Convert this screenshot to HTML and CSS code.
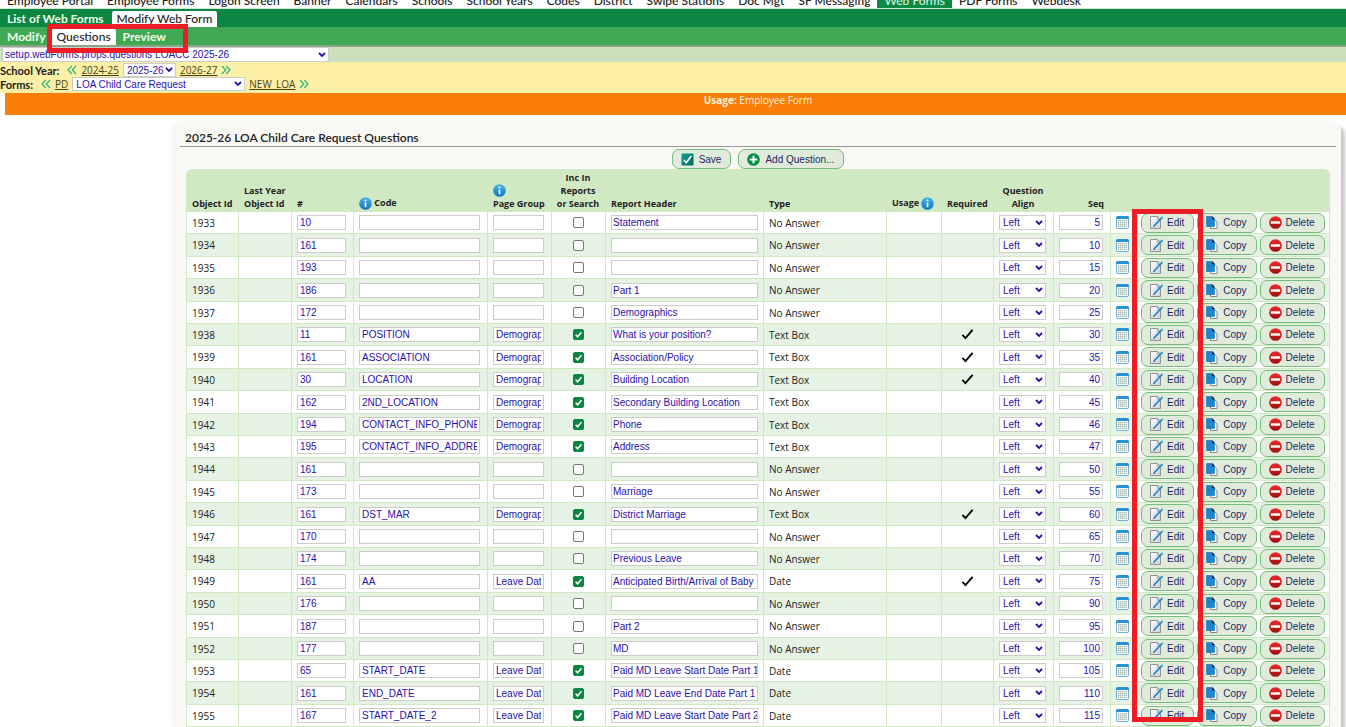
FILE: index.html
```html
<!DOCTYPE html>
<html lang="en">
<head>
    <meta charset="UTF-8">
    <meta name="viewport" content="width=device-width, initial-scale=1.0">
    <title>Web Forms - Questions</title>
    <link rel="stylesheet" href="styles.css">
</head>
<body>
    <!-- icon sprite -->
    <svg class="sprite" aria-hidden="true">
        <defs>
            <linearGradient id="blueGrad" x1="0" y1="0" x2="0" y2="1">
                <stop offset="0" stop-color="#4db4ea"/>
                <stop offset="1" stop-color="#0f75bd"/>
            </linearGradient>
            <linearGradient id="redGrad" x1="0" y1="0" x2="0" y2="1">
                <stop offset="0" stop-color="#ee2c2c"/>
                <stop offset="1" stop-color="#9c0f12"/>
            </linearGradient>
            <linearGradient id="tealGrad" x1="0" y1="0" x2="1" y2="1">
                <stop offset="0" stop-color="#0fa596"/>
                <stop offset="1" stop-color="#04675c"/>
            </linearGradient>
            <linearGradient id="pageGrad" x1="0" y1="0" x2="1" y2="1">
                <stop offset="0" stop-color="#ffffff"/>
                <stop offset="1" stop-color="#c9cdd2"/>
            </linearGradient>
        </defs>
        <symbol id="i-info" viewBox="0 0 14 14">
            <circle cx="7" cy="7" r="6.8" fill="url(#blueGrad)"/>
            <circle cx="7" cy="3.8" r="1.1" fill="#fff"/>
            <path d="M7 6v5" stroke="#fff" stroke-width="1.8"/>
        </symbol>
        <symbol id="i-save" viewBox="0 0 14 14">
            <rect x=".5" y=".5" width="13" height="13" rx="1" fill="url(#tealGrad)"/>
            <path d="M3 7.5l2.7 3L11 3.2" fill="none" stroke="#fff" stroke-width="1.8"/>
        </symbol>
        <symbol id="i-add" viewBox="0 0 14 14">
            <circle cx="7" cy="7" r="6.8" fill="#0b8c45"/>
            <path d="M7 3v8M3 7h8" stroke="#fff" stroke-width="2"/>
        </symbol>
        <symbol id="i-cal" viewBox="0 0 13 13">
            <rect x=".5" y=".5" width="12" height="12" rx="1.5" fill="#fff" stroke="#6fb2dc"/>
            <path d="M0 3V2q0-2 2-2h9q2 0 2 2v1z" fill="#2492d6"/>
            <path d="M2 4.500h9M2 6.500h9M2 8.500h9M2 10.500h9M2.500 4v7M4.500 4v7M6.500 4v7M8.500 4v7M10.500 4v7" stroke="#a9b8ae" stroke-opacity=".6"/>
        </symbol>
        <symbol id="i-edit" viewBox="0 0 13 13">
            <path d="M.5.5h7l3 3v9H.5z" fill="url(#pageGrad)" stroke="#8d9399"/>
            <path d="M7.500.5v3h3" fill="none" stroke="#8d9399" stroke-width=".7"/>
            <path d="M4 10l8.500-9" stroke="#1b85cc" stroke-width="1.600"/>
            <path d="M3 11.200l1.700-.8-.9-.9z" fill="#333"/>
        </symbol>
        <symbol id="i-copy" viewBox="0 0 13 13">
            <path d="M4.500 3.500h4l2.500 2.500v6.500H4.500z" fill="#fff" stroke="#888"/>
            <path d="M.5.5h5.500l2.500 2.500v7.500h-8z" fill="#1b87d0" stroke="#0f6fb4" stroke-width=".6"/>
            <path d="M6 0l3 3.200H6z" fill="#223"/>
        </symbol>
        <symbol id="i-delete" viewBox="0 0 14 14">
            <circle cx="7" cy="7" r="6.800" fill="url(#redGrad)"/>
            <rect x="2" y="5.700" width="10" height="2.600" fill="#fff"/>
        </symbol>
        <symbol id="i-check" viewBox="0 0 14 14">
            <path d="M1.500 7.500l3.300 3.500L12.500 2" fill="none" stroke="#000" stroke-width="2"/>
        </symbol>
        <symbol id="i-prev" viewBox="0 0 10 10">
            <path d="M4.800 1L1 5l3.800 4M9 1L5.200 5 9 9" fill="none" stroke="#2fb383" stroke-width="1.200"/>
        </symbol>
        <symbol id="i-next" viewBox="0 0 10 10">
            <path d="M1 1l3.800 4L1 9M5.200 1L9 5 5.200 9" fill="none" stroke="#2fb383" stroke-width="1.200"/>
        </symbol>
    </svg>

    <header>
        <nav class="main-nav">
            <a href="#">Employee Portal</a>
            <a href="#">Employee Forms</a>
            <a href="#">Logon Screen</a>
            <a href="#">Banner</a>
            <a href="#">Calendars</a>
            <a href="#">Schools</a>
            <a href="#">School Years</a>
            <a href="#">Codes</a>
            <a href="#">District</a>
            <a href="#">Swipe Stations</a>
            <a href="#">Doc Mgt</a>
            <a href="#">SF Messaging</a>
            <a href="#" class="active">Web Forms</a>
            <a href="#">PDF Forms</a>
            <a href="#">Webdesk</a>
        </nav>
        <nav class="tabs tabs-dark">
            <a href="#">List of Web Forms</a>
            <a href="#" class="active">Modify Web Form</a>
        </nav>
        <nav class="tabs tabs-light">
            <a href="#">Modify</a>
            <a href="#" class="active">Questions</a>
            <a href="#">Preview</a>
            <span class="highlight highlight-tabs"></span>
        </nav>
    </header>

    <div class="props-bar">
        <select class="props-select" aria-label="Property">
            <option>setup.webForms.props.questions LOACC 2025-26</option>
        </select>
    </div>

    <div class="filters">
        <div class="filter-row">
            <label for="year">School Year:</label>
            <svg class="arrow"><use href="#i-prev"/></svg>
            <a href="#">2024-25</a>
            <select id="year" class="year-select"><option>2025-26</option></select>
            <a href="#">2026-27</a>
            <svg class="arrow"><use href="#i-next"/></svg>
        </div>
        <div class="filter-row">
            <label for="form">Forms:</label>
            <svg class="arrow"><use href="#i-prev"/></svg>
            <a href="#">PD</a>
            <select id="form" class="form-select"><option>LOA Child Care Request</option></select>
            <a href="#">NEW_LOA</a>
            <svg class="arrow"><use href="#i-next"/></svg>
        </div>
    </div>

    <div class="usage-bar"><b>Usage:</b> Employee Form</div>

    <main class="panel">
        <h1>2025-26 LOA Child Care Request Questions</h1>
        <div class="toolbar">
            <button type="button" class="btn"><svg><use href="#i-save"/></svg>Save</button>
            <button type="button" class="btn"><svg><use href="#i-add"/></svg>Add Question...</button>
        </div>

        <div class="table-wrap">
            <table class="questions">
                <colgroup>
                    <col class="c-id"><col class="c-last"><col class="c-num"><col class="c-code">
                    <col class="c-group"><col class="c-inc"><col class="c-header"><col class="c-type">
                    <col class="c-usage"><col class="c-req"><col class="c-align"><col class="c-seq">
                    <col class="c-cal"><col class="c-actions">
                </colgroup>
                <thead>
                    <tr>
                        <th>Object Id</th>
                        <th>Last Year<br>Object Id</th>
                        <th>#</th>
                        <th><svg class="info"><use href="#i-info"/></svg> Code</th>
                        <th><svg class="info"><use href="#i-info"/></svg><br>Page Group</th>
                        <th class="center">Inc In<br>Reports<br>or Search</th>
                        <th>Report Header</th>
                        <th>Type</th>
                        <th>Usage <svg class="info"><use href="#i-info"/></svg></th>
                        <th>Required</th>
                        <th class="center">Question<br>Align</th>
                        <th class="right">Seq</th>
                        <th></th>
                        <th></th>
                    </tr>
                </thead>
                <tbody id="rows"></tbody>
            </table>
            <span class="highlight highlight-edit"></span>
        </div>
    </main>

    <script src="questions.js"></script>
</body>
</html>
```
FILE: styles.css
```css
* {
    box-sizing: border-box;
}
body {
    margin: 0;
    font-family: "Open Sans", sans-serif;
    font-size: 10px;
    color: #222;
    background: #fff;
    overflow: hidden;
}
a {
    color: inherit;
}
.sprite {
    position: absolute;
    width: 0;
    height: 0;
}

/* navigation */
.main-nav {
    display: flex;
    align-items: flex-end;
    height: 9px;
    overflow: hidden;
    font-family: Lato, sans-serif;
    font-size: 12px;
    line-height: 14px;
    border-bottom: 1px solid #cfe8d8;
}
.main-nav a {
    padding: 0 7px;
    font-weight: 500;
    text-decoration: none;
    white-space: nowrap;
}
.main-nav .active {
    background: #0a8a45;
    color: #d9f2df;
}
.tabs {
    position: relative;
    display: flex;
    height: 18px;
    padding-top: 2px;
    font-family: Lato, sans-serif;
    font-size: 12px;
    line-height: 16px;
    color: #f2ffe9;
}
.tabs a {
    padding: 0 8px 0 7px;
    font-weight: bold;
    text-decoration: none;
}
.tabs .active {
    padding: 0 5px;
    background: #fff;
    color: #222;
    font-weight: 500;
    border-radius: 2px 2px 0 0;
}
.tabs-dark {
    background: #0a8642;
}
.tabs-light {
    height: 20px;
    background: #41a955;
    border-bottom: 2px solid #8aa585;
}
.tabs-light a {
    padding: 0 6px 0 7px;
}

/* red call-out frames */
.highlight {
    position: absolute;
    z-index: 2;
    border: 5px solid #ee1c25;
    pointer-events: none;
}
.highlight-tabs {
    left: 47px;
    top: -3px;
    width: 141px;
    height: 29px;
}
.highlight-edit {
    right: 127px;
    top: 40px;
    width: 71px;
    bottom: 5px;
}

/* inputs */
input,
select {
    font-family: "Liberation Sans", Arial, sans-serif;
    font-size: 10px;
    color: #2a11a8;
    background: #fff;
    border: 1px solid #ccc;
    border-radius: 0;
}
select {
    height: 14px;
    padding: 0 3px;
    appearance: none;
    background: #fff url("data:image/svg+xml,%3Csvg xmlns='http://www.w3.org/2000/svg' viewBox='0 0 8 6'%3E%3Cpath d='M1 1l3 3 3-3' fill='none' stroke='%232a11a8' stroke-width='1.8'/%3E%3C/svg%3E") no-repeat right 2px center / 8px 6px;
}

.props-bar {
    display: flex;
    height: 15px;
    background: #cbe1bc;
}
.props-select {
    width: 327px;
    height: 15px;
    margin-left: 2px;
    padding: 0 2px;
}
.filters {
    height: 31px;
    padding-top: 1px;
    background: #fbf0a5;
}
.filter-row {
    display: flex;
    align-items: center;
    gap: 4px;
    height: 14px;
}
.filter-row label {
    margin-right: 4px;
    font-family: Lato, sans-serif;
    font-size: 11px;
    font-weight: bold;
}
.filter-row a {
    color: #4a4216;
}
.arrow {
    width: 10px;
    height: 10px;
}
.year-select {
    width: 53px;
}
.form-select {
    width: 173px;
}
.usage-bar {
    height: 22px;
    margin-left: 5px;
    padding-left: 165px;
    background: #fa7e07;
    color: #fff3dd;
    font-size: 10px;
    line-height: 14px;
    text-align: center;
}

/* panel */
.panel {
    margin: 7px 5px 0 175px;
    padding: 8px 5px 0;
    background: #faf8f5;
    border-radius: 8px 8px 0 0;
    box-shadow: 4px 4px 3px #ccc, -2px 0 4px #eee;
}
h1 {
    margin: 0;
    padding-left: 5px;
    font-family: Lato, sans-serif;
    font-size: 12px;
    line-height: 16px;
    font-weight: 600;
    border-bottom: 1px solid #999;
}
.toolbar {
    display: flex;
    justify-content: center;
    gap: 7px;
    padding-top: 2px;
}
.btn {
    display: inline-flex;
    align-items: center;
    height: 20px;
    padding: 0 9px 0 8px;
    gap: 5px;
    font-family: "Liberation Sans", Arial, sans-serif;
    font-size: 10px;
    color: #241f66;
    background: #e0ecd9;
    border: 1px solid #74bd7f;
    border-radius: 7px;
    white-space: nowrap;
}
.btn svg {
    width: 13px;
    height: 13px;
}

/* questions table */
.table-wrap {
    position: relative;
    margin: 0 6px;
}
.questions {
    width: 100%;
    table-layout: fixed;
    border-spacing: 0;
    border-right: 1px solid #d1e9c3;
    border-radius: 6px 6px 0 0;
    background: #d1e9c3;
}
.c-id { width: 52px; }
.c-last { width: 53px; }
.c-num { width: 62px; }
.c-code { width: 134px; }
.c-group { width: 64px; }
.c-inc { width: 54px; }
.c-header { width: 158px; }
.c-usage { width: 55px; }
.c-req { width: 52px; }
.c-align { width: 60px; }
.c-seq { width: 57px; }
.c-cal { width: 27px; }
.c-actions { width: 192px; }
th {
    height: 43px;
    padding: 0 0 2px 6px;
    font-size: 9px;
    line-height: 13px;
    text-align: left;
    vertical-align: bottom;
    white-space: nowrap;
}
th .info {
    vertical-align: -4px;
}
.info {
    width: 13px;
    height: 13px;
}
.center {
    padding: 0 0 2px;
    text-align: center;
}
th.right {
    padding-right: 6px;
    text-align: right;
}
td {
    height: 22px;
    padding: 0 0 0 5px;
    border-left: 1px solid #d1e9c3;
    border-bottom: 1px solid #d1e9c3;
    background: #fff;
    white-space: nowrap;
}
tr:nth-child(even) td {
    background: #e6f3e4;
}
tr:nth-child(5n+2) td,
tr:nth-child(5n+4) td {
    height: 23px;
}
td.center {
    padding: 0;
}
td input,
td select,
td svg {
    display: block;
}
td input {
    height: 15px;
    padding: 0 2px;
    width: calc(100% - 7px);
}
td .report-header {
    padding: 0 0 0 1px;
    width: calc(100% - 5px);
}
td .seq {
    text-align: right;
}
td select {
    width: 47px;
    height: 15px;
}
.mark {
    width: 13px;
    height: 13px;
    margin: 0 auto;
}
.cal {
    width: 13px;
    height: 13px;
}
td input[type="checkbox"] {
    appearance: none;
    width: 11px;
    height: 11px;
    margin: 0 auto;
    padding: 0;
    border: 1px solid #777;
    border-radius: 2px;
}
td input[type="checkbox"]:checked {
    border-color: #0a8642;
    background: #0a8642 url("data:image/svg+xml,%3Csvg xmlns='http://www.w3.org/2000/svg' viewBox='0 0 10 10'%3E%3Cpath d='M1.800 5.200l2.200 2.300L8.300 2.500' fill='none' stroke='white' stroke-width='1.700'/%3E%3C/svg%3E") center / 9px 9px no-repeat;
}
.actions {
    display: flex;
    gap: 3px;
    margin-left: -2px;
}
.actions .btn {
    gap: 4px;
}
```
FILE: questions.js
```js
// id, number, code, page group, included in reports, report header, type, required, seq
const questions = [
    [1933, 10, '', '', 0, 'Statement', 'No Answer', 0, 5],
    [1934, 161, '', '', 0, '', 'No Answer', 0, 10],
    [1935, 193, '', '', 0, '', 'No Answer', 0, 15],
    [1936, 186, '', '', 0, 'Part 1', 'No Answer', 0, 20],
    [1937, 172, '', '', 0, 'Demographics', 'No Answer', 0, 25],
    [1938, 11, 'POSITION', 'Demographics', 1, 'What is your position?', 'Text Box', 1, 30],
    [1939, 161, 'ASSOCIATION', 'Demographics', 1, 'Association/Policy', 'Text Box', 1, 35],
    [1940, 30, 'LOCATION', 'Demographics', 1, 'Building Location', 'Text Box', 1, 40],
    [1941, 162, '2ND_LOCATION', 'Demographics', 1, 'Secondary Building Location', 'Text Box', 0, 45],
    [1942, 194, 'CONTACT_INFO_PHONE', 'Demographics', 1, 'Phone', 'Text Box', 0, 46],
    [1943, 195, 'CONTACT_INFO_ADDRESS', 'Demographics', 1, 'Address', 'Text Box', 0, 47],
    [1944, 161, '', '', 0, '', 'No Answer', 0, 50],
    [1945, 173, '', '', 0, 'Marriage', 'No Answer', 0, 55],
    [1946, 161, 'DST_MAR', 'Demographics', 1, 'District Marriage', 'Text Box', 1, 60],
    [1947, 170, '', '', 0, '', 'No Answer', 0, 65],
    [1948, 174, '', '', 0, 'Previous Leave', 'No Answer', 0, 70],
    [1949, 161, 'AA', 'Leave Dates', 1, 'Anticipated Birth/Arrival of Baby', 'Date', 1, 75],
    [1950, 176, '', '', 0, '', 'No Answer', 0, 90],
    [1951, 187, '', '', 0, 'Part 2', 'No Answer', 0, 95],
    [1952, 177, '', '', 0, 'MD', 'No Answer', 0, 100],
    [1953, 65, 'START_DATE', 'Leave Dates', 1, 'Paid MD Leave Start Date Part 1', 'Date', 0, 105],
    [1954, 161, 'END_DATE', 'Leave Dates', 1, 'Paid MD Leave End Date Part 1', 'Date', 0, 110],
    [1955, 167, 'START_DATE_2', 'Leave Dates', 1, 'Paid MD Leave Start Date Part 2', 'Date', 0, 115]
];

function button(icon, text) {
    return `<button type="button" class="btn"><svg><use href="#i-${icon}"/></svg>${text}</button>`;
}

document.getElementById('rows').innerHTML = questions.map(([id, num, code, group, inc, header, type, req, seq]) => `
    <tr>
        <td>${id}</td>
        <td></td>
        <td><input type="text" aria-label="Number" value="${num}"></td>
        <td><input type="text" aria-label="Code" value="${code}"></td>
        <td><input type="text" aria-label="Page Group" value="${group}"></td>
        <td class="center"><input type="checkbox" aria-label="Include in reports" ${inc ? 'checked' : ''}></td>
        <td><input type="text" class="report-header" aria-label="Report Header" value="${header}"></td>
        <td>${type}</td>
        <td></td>
        <td class="center">${req ? '<svg class="mark"><use href="#i-check"/></svg>' : ''}</td>
        <td><select aria-label="Question Align"><option>Left</option></select></td>
        <td><input type="text" class="seq" aria-label="Seq" value="${seq}"></td>
        <td><svg class="cal"><use href="#i-cal"/></svg></td>
        <td><div class="actions">${button('edit', 'Edit')}${button('copy', 'Copy')}${button('delete', 'Delete')}</div></td>
    </tr>`).join('');
```
